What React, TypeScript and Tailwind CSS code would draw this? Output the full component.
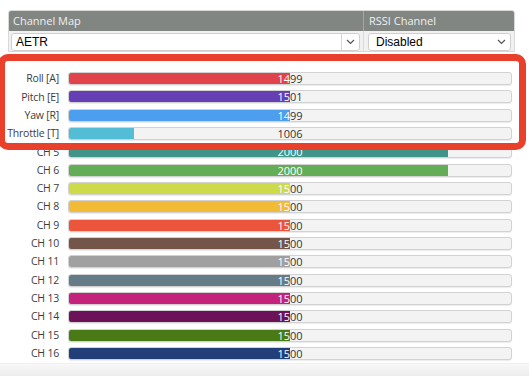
import React from 'react';

interface Channel {
  name: string;
  value: number;
  color: string;
}

const channels: Channel[] = [
  { name: 'Roll [A]', value: 1499, color: '#e0434a' },
  { name: 'Pitch [E]', value: 1501, color: '#673fb4' },
  { name: 'Yaw [R]', value: 1499, color: '#4e9ef0' },
  { name: 'Throttle [T]', value: 1006, color: '#52bdd4' },
  { name: 'CH 5', value: 2000, color: '#409588' },
  { name: 'CH 6', value: 2000, color: '#62ad56' },
  { name: 'CH 7', value: 1500, color: '#cddb4a' },
  { name: 'CH 8', value: 1500, color: '#f2bb37' },
  { name: 'CH 9', value: 1500, color: '#ea553b' },
  { name: 'CH 10', value: 1500, color: '#735649' },
  { name: 'CH 11', value: 1500, color: '#a0a0a0' },
  { name: 'CH 12', value: 1500, color: '#657c88' },
  { name: 'CH 13', value: 1500, color: '#c3237b' },
  { name: 'CH 14', value: 1500, color: '#6c1259' },
  { name: 'CH 15', value: 1500, color: '#497a16' },
  { name: 'CH 16', value: 1500, color: '#223f79' },
];

// bar scale used by the receiver tab
const MIN = 800;
const MAX = 2200;

const Chevron = () => (
  <svg width="9" height="6" viewBox="0 0 9 6" className="shrink-0">
    <polyline points="1,1 4.5,4.5 8,1" fill="none" stroke="#555" strokeWidth="1.2" />
  </svg>
);

const ChannelRow: React.FC<{ ch: Channel }> = ({ ch }) => {
  const pct = ((ch.value - MIN) / (MAX - MIN)) * 100;
  return (
    <div className="flex items-center h-[18.33px]">
      <div className="w-[59px] text-right text-[10.5px] tracking-[-0.2px] text-[#3d3d3d] whitespace-nowrap leading-none">
        {ch.name}
      </div>
      <div className="ml-[9px] relative w-[444px] h-[13px] rounded-[3px] border border-[#d2d2d2] bg-[#f3f3f3] overflow-hidden shadow-[0_1px_1px_rgba(0,0,0,0.08)]">
        <div className="absolute inset-0 flex items-center justify-center text-[11px] text-[#333] leading-none">
          {ch.value}
        </div>
        <div className="absolute left-0 top-0 bottom-0 overflow-hidden" style={{ width: `${pct}%`, backgroundColor: ch.color }}>
          <div className="w-[442px] h-full flex items-center justify-center text-[11px] text-white leading-none">
            {ch.value}
          </div>
        </div>
      </div>
    </div>
  );
};

export default function App() {
  return (
    <div className="relative w-[529px] h-[376px] overflow-hidden bg-white font-['Open_Sans',sans-serif] flex flex-col">
      {/* Channel map / RSSI table */}
      <div className="mt-[10px] ml-[8px] w-[507px] rounded-t-[3px] overflow-hidden border border-[#d8d8d8] bg-[#f1f1f1]">
        <div className="flex h-[20px] bg-[#828682] text-[11px] text-[#eef0ee]">
          <div className="w-[355px] pl-[4px] flex items-center border-r border-[#a4a7a4]">Channel Map</div>
          <div className="flex-1 pl-[5px] flex items-center">RSSI Channel</div>
        </div>
        <div className="flex h-[22px] items-center font-['Liberation_Sans',Arial,sans-serif] text-[12px] text-black">
          <div className="w-[355px] h-full flex items-center pl-[2px] pr-[3px] border-r border-[#dcdcdc]">
            <div className="flex-1 h-[18px] flex items-center bg-white border border-[#cfcfcf] rounded-[3px] pl-[4px]">
              <span className="flex-1">AETR</span>
              <div className="w-px h-full bg-[#d6d6d6]" />
              <div className="w-[17px] flex justify-center">
                <Chevron />
              </div>
            </div>
          </div>
          <div className="flex-1 h-full flex items-center pl-[4px] pr-[3px]">
            <div className="flex-1 h-[18px] flex items-center bg-white border border-[#cfcfcf] rounded-[3px] pl-[7px] pr-[4px]">
              <span className="flex-1">Disabled</span>
              <Chevron />
            </div>
          </div>
        </div>
      </div>

      {/* channel bars */}
      <div className="mt-[17px] flex flex-col">
        {channels.map((ch) => (
          <ChannelRow key={ch.name} ch={ch} />
        ))}
      </div>

      {/* bottom status strip */}
      <div className="mt-auto h-[14px] bg-gradient-to-b from-[#f8f8f8] to-[#ececec] border-t border-[#f0f0f0]" />

      {/* red highlight annotation */}
      <div className="absolute left-[-2px] top-[54px] w-[528px] h-[96px] border-[7px] border-[#e8402b] rounded-[10px] pointer-events-none" />
    </div>
  );
}
